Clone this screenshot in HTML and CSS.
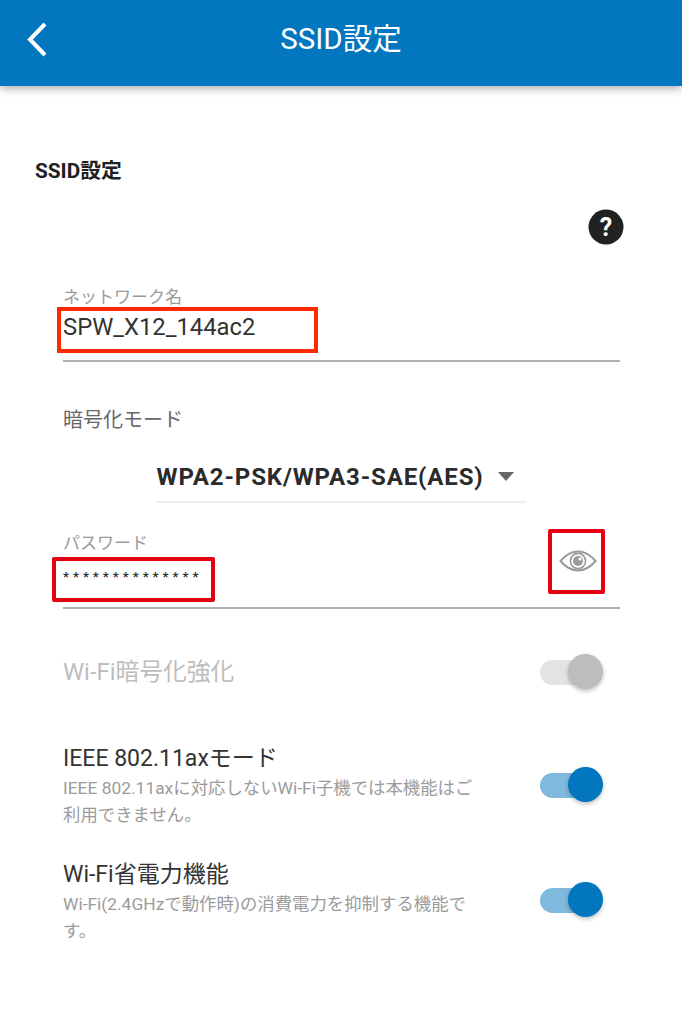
FILE: index.html
```html
<!DOCTYPE html>
<html lang="ja">
<head>
<meta charset="utf-8">
<title>SSID設定</title>
<link rel="stylesheet" href="styles.css">
</head>
<body>
<header class="appbar">
  <svg class="back" width="24" height="36" viewBox="0 0 24 36"><path d="M20 3 L5 18.5 L20 34" fill="none" stroke="#fff" stroke-width="4"/></svg>
  <h1 class="appbar-title">SSID設定</h1>
</header>
<main class="content">
  <h2 class="section-title">SSID設定</h2>
  <div class="help-row">
    <svg class="help" width="36" height="36" viewBox="0 0 36 36"><circle cx="18" cy="18" r="17.5" fill="#212121"/><text x="18" y="26.5" class="help-mark">?</text></svg>
  </div>
  <section class="field field-name">
    <label class="field-label">ネットワーク名</label>
    <div class="field-value">SPW_X12_144ac2</div>
    <span class="mark mark-name"></span>
  </section>
  <div class="mode-label">暗号化モード</div>
  <div class="select-wrap">
    <div class="select"><span class="select-value">WPA2-PSK/WPA3-SAE(AES)</span><span class="caret"></span></div>
  </div>
  <section class="field field-pass">
    <label class="field-label">パスワード</label>
    <div class="field-value dots">**************</div>
    <svg class="eye" width="38" height="22" viewBox="0 0 38 22"><path d="M1.5 11 C7 4.5 13 1.5 19 1.5 S31 4.5 36.5 11 C31 17.5 25 20.5 19 20.5 S7 17.5 1.5 11 Z" fill="none" stroke="#9a9a9a" stroke-width="2"/><circle cx="19" cy="11" r="7.6" fill="none" stroke="#9a9a9a" stroke-width="1.6"/><circle cx="19" cy="11" r="5" fill="#9a9a9a"/><circle cx="21" cy="9" r="1.6" fill="#fff"/></svg>
    <span class="mark mark-pass"></span>
    <span class="mark mark-eye"></span>
  </section>
  <div class="toggle-row row-enc">
    <div class="toggle-text"><div class="toggle-title disabled">Wi-Fi暗号化強化</div></div>
    <div class="switch off"><span class="track"></span><span class="thumb"></span></div>
  </div>
  <div class="toggle-row row-ax">
    <div class="toggle-text">
      <div class="toggle-title">IEEE 802.11axモード</div>
      <p class="toggle-desc">IEEE 802.11axに対応しないWi-Fi子機では本機能はご利用できません。</p>
    </div>
    <div class="switch"><span class="track"></span><span class="thumb"></span></div>
  </div>
  <div class="toggle-row row-eco">
    <div class="toggle-text">
      <div class="toggle-title">Wi-Fi省電力機能</div>
      <p class="toggle-desc">Wi-Fi(2.4GHzで動作時)の消費電力を抑制する機能です。</p>
    </div>
    <div class="switch"><span class="track"></span><span class="thumb"></span></div>
  </div>
</main>
</body>
</html>
```
FILE: styles.css
```css
* { box-sizing: border-box; }
html, body { margin: 0; padding: 0; background: #fff; }
body {
  width: 682px;
  height: 1024px;
  overflow: hidden;
  font-family: Roboto, "Noto Sans CJK JP", sans-serif;
  color: #212121;
}
.appbar {
  position: relative;
  height: 86px;
  background: #0277bf;
  box-shadow: 0 3px 8px rgba(0,0,0,.3);
  display: flex;
  align-items: center;
  justify-content: center;
  padding-bottom: 8px;
}
.back { position: absolute; left: 25px; top: 21px; }
.appbar-title {
  margin: 0;
  font-size: 29.5px;
  font-weight: 400;
  line-height: 36px;
  color: #fff;
}
.content { padding: 73px 62px 0 63px; }
.section-title {
  margin: 0 0 0 -28px;
  font-size: 20.8px;
  font-weight: 700;
  line-height: 24px;
  color: #212121;
}
.help-row { display: flex; justify-content: flex-end; margin: 26px -4px 0 0; }
.help-mark { font: 700 25px Roboto, sans-serif; fill: #fff; text-anchor: middle; }
.field { position: relative; border-bottom: 2px solid #b0b0b0; }
.field-name { margin-top: 42px; height: 75px; }
.field-label { display: block; font-size: 17px; line-height: 20px; color: #9b9b9b; }
.field-value { font-size: 23.8px; line-height: 30px; margin-top: 5px; color: #333; }
.dots { font-size: 13px; line-height: 20px; margin-top: 14px; letter-spacing: 4.05px; font-weight: 700; }
.mark { position: absolute; display: block; border: 4px solid #e60012; }
.mark-name { left: -6px; top: 20px; width: 261px; height: 46px; border-color: #ff2a00; }
.mark-pass { left: -11px; top: 24px; width: 163px; height: 45px; border-radius: 2px; }
.mark-eye { left: 485px; top: -4px; width: 57px; height: 65px; border-radius: 2px; }
.eye { position: absolute; left: 496px; top: 17px; }
.mode-label { margin-top: 44px; font-size: 20px; line-height: 28px; color: #666; }
.select-wrap { display: flex; justify-content: center; margin-top: 18px; padding-right: 1px; }
.select {
  width: 369px;
  height: 51px;
  border-bottom: 2px solid #eee;
  display: flex;
  align-items: center;
  gap: 14px;
}
.select-value { font-size: 24px; font-weight: 700; letter-spacing: .88px; color: #2b2b2b; white-space: nowrap; }
.caret { width: 0; height: 0; border: 8.5px solid transparent; border-top: 9px solid #666; border-bottom: 0; }
.field-pass { margin-top: 30px; height: 76px; }
.toggle-row { display: flex; justify-content: space-between; align-items: center; }
.row-enc { margin-top: 48px; height: 30px; }
.row-ax { margin-top: 57px; }
.row-eco { margin-top: 31px; }
.toggle-text { width: 414px; }
.toggle-title { font-size: 23px; line-height: 30px; color: #333; }
.toggle-title.disabled { font-size: 23.8px; color: #bdbdbd; }
.toggle-desc { margin: 1px 0 0; font-size: 17.4px; line-height: 27px; color: #9b9b9b; }
.switch { position: relative; width: 63px; height: 36px; flex: none; margin-right: 17px; }
.row-ax .switch { margin-bottom: 4px; }
.row-eco .switch { margin-bottom: 6px; }
.track { position: absolute; left: 0; top: 6px; width: 58px; height: 25px; border-radius: 13px; background: #80b9de; }
.thumb { position: absolute; left: 28px; top: 0; width: 35px; height: 35px; border-radius: 50%; background: #0277bf; box-shadow: 0 2px 4px rgba(0,0,0,.25); }
.switch.off .track { background: #e3e3e3; }
.switch.off .thumb { background: #bdbdbd; }
```
